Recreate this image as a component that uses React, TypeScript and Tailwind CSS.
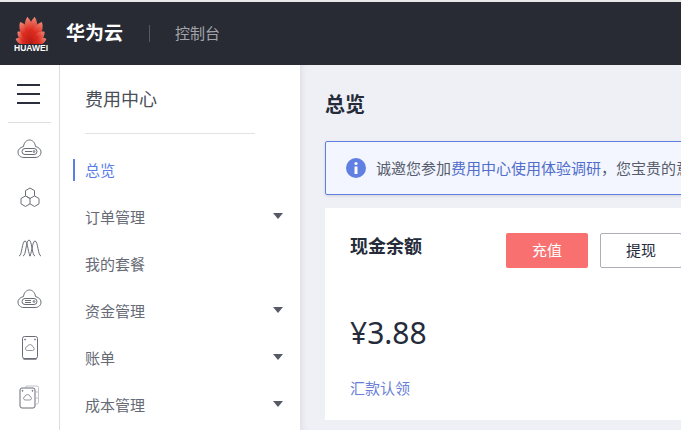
const nav = [
  { label: "总览", active: true },
  { label: "订单管理", arrow: true },
  { label: "我的套餐" },
  { label: "资金管理", arrow: true },
  { label: "账单", arrow: true },
  { label: "成本管理", arrow: true },
];

function HuaweiLogo() {
  const petals = [
    { a: -74, len: 16, w: 5 },
    { a: -49, len: 18, w: 5.5 },
    { a: -27, len: 24, w: 6 },
    { a: -8, len: 27, w: 5.5 },
    { a: 8, len: 27, w: 5.5 },
    { a: 27, len: 24, w: 6 },
    { a: 49, len: 18, w: 5.5 },
    { a: 74, len: 16, w: 5 },
  ];
  return (
    <svg width="34" height="28" viewBox="0 0 34 28">
      <defs>
        <linearGradient id="petal" x1="0" y1="0" x2="0" y2="1">
          <stop offset="0" stopColor="#f08a78" />
          <stop offset="0.5" stopColor="#dd2c20" />
          <stop offset="1" stopColor="#b81a14" />
        </linearGradient>
      </defs>
      {petals.map((p) => (
        <path
          key={p.a}
          d={`M0 0C-${p.w} -${p.len * 0.35} -${p.w} -${p.len * 0.75} 0 -${p.len}C${p.w} -${p.len * 0.75} ${p.w} -${p.len * 0.35} 0 0Z`}
          fill="url(#petal)"
          transform={`translate(17 27.500) rotate(${p.a})`}
        />
      ))}
    </svg>
  );
}

function CloudIcon({ lines }: { lines?: boolean }) {
  return (
    <svg width="25" height="20" viewBox="0 0 25 20" fill="none" stroke="#6a6d76" strokeWidth="1" className="mt-[2px]">
      <path d="M6.500 7.500C7 3.500 9.500 1 12.500 1s5.500 2.500 6 6.500M6.500 7.500C3 8.500 1 10.500 1 13c0 3.500 2.500 5.500 6 5.500h11c3.500 0 6-2 6-5.500 0-2.500-2-4.500-5.500-5.500" />
      <rect x="5" y="9.500" width="15" height="6" rx="3" />
      {lines ? <path d="M8 11.500h6M8 13.500h6" /> : <path d="M8 12.500h7" />}
      <circle cx="17" cy="12.500" r=".9" />
    </svg>
  );
}

function HexIcon() {
  return (
    <svg width="22" height="22" viewBox="0 0 22 22" fill="none" stroke="#6a6d76" strokeWidth="1">
      <path d="M11 1l4.500 2.600v5.300L11 11.500 6.500 8.900V3.600z" />
      <path d="M6.500 8.900l4.500 2.600v5.300l-4.500 2.700L2 16.800v-5.300z" />
      <path d="M15.500 8.900l4.500 2.600v5.300l-4.500 2.700-4.500-2.700" />
    </svg>
  );
}

function WaveIcon() {
  return (
    <svg width="24" height="18" viewBox="0 0 24 18" fill="none" stroke="#6a6d76" strokeWidth="1">
      <path d="M1 17C4 17 4 2 7 2s3 15 6 15" />
      <path d="M5 17C8 17 8 1 11 1s3 16 6 16" />
      <path d="M11 17c3 0 3-15 6-15s3 15 6 15" />
    </svg>
  );
}

function DeviceIcon() {
  return (
    <svg width="20" height="26" viewBox="0 0 20 26" fill="none" stroke="#6a6d76" strokeWidth="1">
      <rect x="2.500" y="1.500" width="15" height="22" rx="2" />
      <path d="M3.500 24h13" strokeWidth="1.500" />
      <path d="M7.500 15.500h5a1.800 1.800 0 0 0 .5-3.500 3 3 0 0 0-5.800-.3 1.900 1.900 0 0 0 .3 3.800z" strokeWidth="0.7" />
      <circle cx="5" cy="4.500" r=".5" />
      <circle cx="15" cy="4.500" r=".5" />
    </svg>
  );
}

function DevicesIcon() {
  return (
    <svg width="24" height="26" viewBox="0 0 24 26" fill="none" stroke="#6a6d76" strokeWidth="1" className="mb-[2px]">
      <path d="M8 3.500V2h11a1.500 1.500 0 0 1 1.500 1.500v15a1.500 1.500 0 0 1-1.500 1.500h-1" stroke="#c2c4c9" />
      <path d="M18 8h2M18 14h2" stroke="#c2c4c9" />
      <rect x="2" y="4" width="15" height="20" rx="2" />
      <path d="M7 16h5a1.700 1.700 0 0 0 .3-3.300 2.800 2.800 0 0 0-5.400-.2A1.800 1.800 0 0 0 7 16z" strokeWidth="0.7" />
      <circle cx="4.500" cy="6.800" r=".5" />
      <circle cx="14.500" cy="6.800" r=".5" />
    </svg>
  );
}

function Rail() {
  const icons = [
    <CloudIcon key="a" />,
    <HexIcon key="b" />,
    <WaveIcon key="c" />,
    <CloudIcon key="d" lines />,
    <DeviceIcon key="e" />,
    <DevicesIcon key="f" />,
  ];
  return (
    <div className="w-[60px] shrink-0 border-r border-[#dddddd] bg-white flex flex-col">
      <div className="mx-2 h-[58px] border-b border-[#e0e0e0] pt-[19px] pl-[9px] flex flex-col gap-[7px]">
        <div className="w-[23px] h-[2px] bg-[#2b2f3c]" />
        <div className="w-[23px] h-[2px] bg-[#2b2f3c]" />
        <div className="w-[23px] h-[2px] bg-[#2b2f3c]" />
      </div>
      <div>
        {icons.map((icon, i) => (
          <div key={i} className="h-[50px] flex items-center justify-center">
            {icon}
          </div>
        ))}
      </div>
    </div>
  );
}

function SideNav() {
  return (
    <div className="w-[240px] shrink-0 bg-white">
      <div className="ml-[25px] mr-[45px] h-[69px] border-b border-[#e3e3e3] pt-[20px] text-[18px] leading-[28px] text-[#4a4e59]">
        费用中心
      </div>
      <div className="pt-[13px]">
        {nav.map((item) => (
          <div key={item.label} className="h-[47px] pl-[13px] pr-[17px] pt-[12px] flex items-start justify-between">
            <div
              className={
                item.active
                  ? "h-[22px] border-l-2 border-[#5b7de6] pl-[10px] text-[15px] leading-[22px] text-[#5b7de6]"
                  : "h-[22px] pl-[12px] text-[15px] leading-[22px] text-[#666a75]"
              }
            >
              {item.label}
            </div>
            {item.arrow && (
              <div className="mt-[7px] w-0 h-0 border-x-[5px] border-x-transparent border-t-[6px] border-t-[#565a66]" />
            )}
          </div>
        ))}
      </div>
    </div>
  );
}

export default function App() {
  return (
    <div
      className="h-screen w-full overflow-hidden flex flex-col border-t-2 border-[#e8e8e8] bg-white"
      style={{ fontFamily: '"Noto Sans", "Noto Sans CJK SC", sans-serif' }}
    >
      <header className="h-[63px] shrink-0 bg-[#282b33] flex items-center">
        <div className="w-[66px] shrink-0 pl-[14px] pt-[2px] flex flex-col items-start">
          <HuaweiLogo />
          <div className="w-[34px] text-center text-[8.500px] leading-[9px] font-bold text-white" style={{ fontFamily: '"Liberation Sans", sans-serif' }}>
            HUAWEI
          </div>
        </div>
        <div className="text-[19px] font-bold text-white">华为云</div>
        <div className="ml-[26px] h-[17px] w-px bg-[#555862]" />
        <div className="ml-[25px] text-[15px] text-[#a3a5ab]">控制台</div>
      </header>

      <div className="flex-1 flex min-h-0">
        <Rail />
        <SideNav />
        <main className="flex-1 min-w-0 overflow-hidden bg-[#eef0f5] pl-[25px] shadow-[inset_6px_0_6px_-4px_rgba(0,0,0,0.07)]">
          <div className="w-[600px]">
            <h1 className="pt-[25px] text-[20px] leading-[30px] font-bold text-[#252b3a]">总览</h1>
            <div className="mt-[21px] h-[54px] rounded-[2px] border border-[#5f7fe3] bg-[#f3f6ff] pl-[20px] flex items-center gap-[10px] shadow-[0_1px_3px_rgba(0,0,0,0.12)]">
              <svg width="20" height="20" viewBox="0 0 20 20" className="shrink-0">
                <circle cx="10" cy="10" r="10" fill="#5f7fe3" />
                <circle cx="10" cy="5.500" r="1.600" fill="#fff" />
                <rect x="8.500" y="8.500" width="3" height="7.500" fill="#fff" />
              </svg>
              <p className="whitespace-nowrap text-[15px] text-[#575d6c]">
                诚邀您参加<span className="text-[#526ecc]">费用中心使用体验调研</span>，您宝贵的意见将帮助我们改进
              </p>
            </div>
            <section className="mt-[13px] h-[212px] bg-white px-[25px] pt-[25px]">
              <div className="flex items-start">
                <h2 className="w-[156px] text-[18px] leading-[26px] font-bold text-[#252b3a]">现金余额</h2>
                <button className="h-[35px] w-[82px] rounded-[2px] bg-[#f97070] text-[15px] text-white">充值</button>
                <button className="ml-[12px] h-[35px] w-[82px] rounded-[2px] border border-[#adb0b8] bg-white text-[15px] text-[#252b3a]">
                  提现
                </button>
              </div>
              <div className="mt-[45px] text-[30px] leading-[40px] text-[#252b3a]">¥3.88</div>
              <a className="mt-[24px] block text-[15px] leading-[22px] text-[#6b7fd7]">汇款认领</a>
            </section>
          </div>
        </main>
      </div>
    </div>
  );
}
